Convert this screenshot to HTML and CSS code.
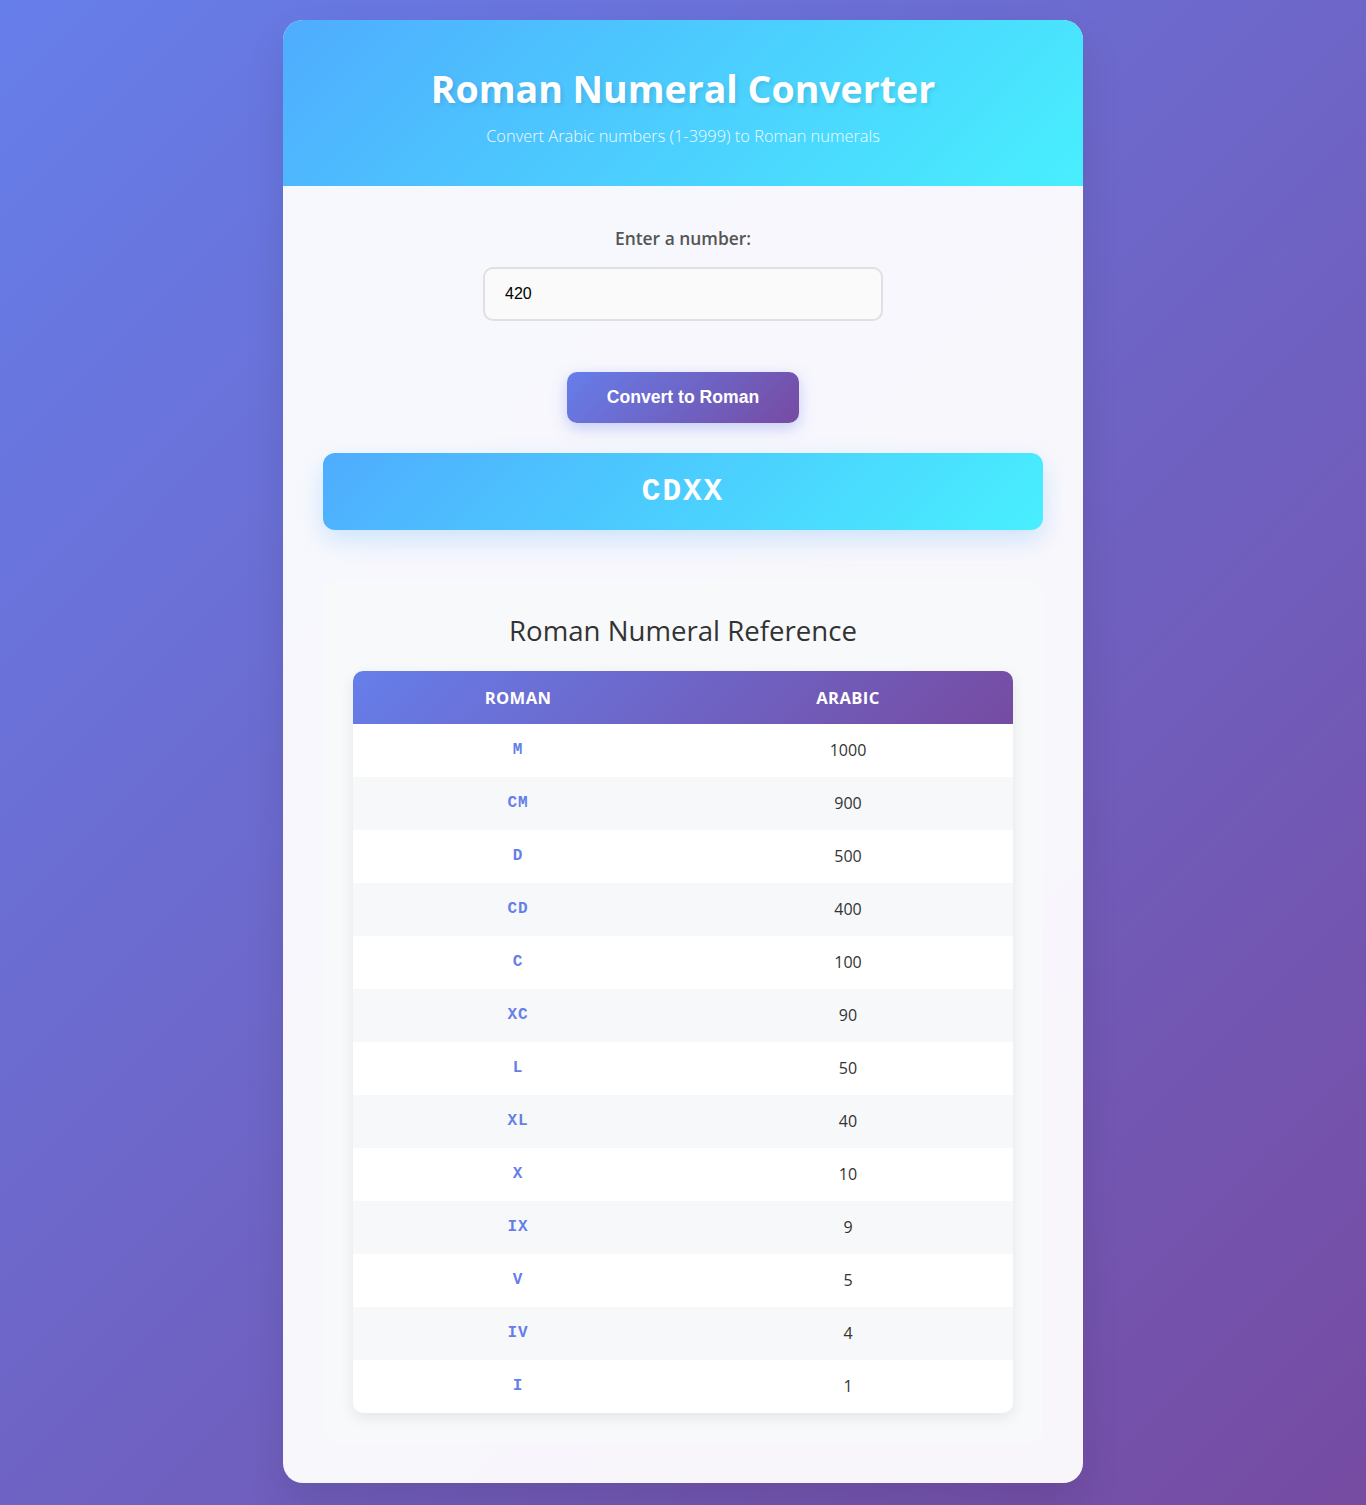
FILE: index.html
```html
<!DOCTYPE html>
<html lang="en">
<head>
<meta charset="utf-8">
<title>Roman Numeral Converter</title>
<link rel="stylesheet" href="styles.css">
</head>
<body>
<div class="container">
  <header class="header">
    <h1 class="title">Roman Numeral Converter</h1>
    <p class="subtitle">Convert Arabic numbers (1-3999) to Roman numerals</p>
  </header>
  <main class="content">
    <div class="input-group">
      <label class="label" for="num">Enter a number:</label>
      <input class="number-input" id="num" type="number" value="420">
    </div>
    <div class="actions">
      <button class="convert-btn" type="button">Convert to Roman</button>
    </div>
    <div class="result">CDXX</div>
    <section class="reference">
      <h2 class="ref-title">Roman Numeral Reference</h2>
      <table class="ref-table">
        <thead>
          <tr><th>Roman</th><th>Arabic</th></tr>
        </thead>
        <tbody>
          <tr><td class="roman">M</td><td>1000</td></tr>
          <tr><td class="roman">CM</td><td>900</td></tr>
          <tr><td class="roman">D</td><td>500</td></tr>
          <tr><td class="roman">CD</td><td>400</td></tr>
          <tr><td class="roman">C</td><td>100</td></tr>
          <tr><td class="roman">XC</td><td>90</td></tr>
          <tr><td class="roman">L</td><td>50</td></tr>
          <tr><td class="roman">XL</td><td>40</td></tr>
          <tr><td class="roman">X</td><td>10</td></tr>
          <tr><td class="roman">IX</td><td>9</td></tr>
          <tr><td class="roman">V</td><td>5</td></tr>
          <tr><td class="roman">IV</td><td>4</td></tr>
          <tr><td class="roman">I</td><td>1</td></tr>
        </tbody>
      </table>
    </section>
  </main>
</div>
</body>
</html>
```
FILE: styles.css
```css
* { box-sizing: border-box; }
html, body { margin: 0; padding: 0; }
body {
  font-family: "Open Sans", "Noto Sans", sans-serif;
  background: linear-gradient(135deg, #667eea 0%, #764ba2 100%);
  min-height: 1505px;
  padding: 20px;
  color: #333;
}
.container {
  width: 800px;
  margin: 0 auto;
  background: rgba(255, 255, 255, 0.95);
  border-radius: 20px;
  box-shadow: 0 20px 40px rgba(0, 0, 0, 0.1);
  overflow: hidden;
}
.header {
  background: linear-gradient(135deg, #4facfe 0%, #48effe 100%);
  color: #fff;
  text-align: center;
  padding: 42px 20px 39px;
}
.title {
  margin: 0 0 9px;
  font-size: 37.5px;
  line-height: 53px;
  font-weight: 700;
  text-shadow: 2px 2px 4px rgba(0, 0, 0, 0.1);
}
.subtitle {
  margin: 0;
  font-size: 16.4px;
  line-height: 23px;
  font-weight: 300;
  opacity: 0.92;
}
.content {
  padding: 40px;
}
.input-group {
  display: flex;
  flex-direction: column;
  align-items: center;
  margin-bottom: 51px;
}
.label {
  font-size: 17.4px;
  line-height: 25px;
  font-weight: 600;
  color: #555;
  margin-bottom: 16px;
}
.number-input {
  width: 400px;
  height: 54px;
  padding: 0 20px;
  border: 2px solid #e0e0e0;
  border-radius: 10px;
  background: #fafafa;
  font-family: "Liberation Sans", Arial, sans-serif;
  font-size: 16px;
  color: #000;
  outline: none;
}
.actions {
  display: flex;
  justify-content: center;
}
.convert-btn {
  background: linear-gradient(135deg, #667eea 0%, #764ba2 100%);
  color: #fff;
  border: none;
  border-radius: 10px;
  padding: 15px 40px;
  font-family: "Liberation Sans", Arial, sans-serif;
  font-size: 17.6px;
  line-height: 21px;
  font-weight: 700;
  box-shadow: 0 5px 15px rgba(102, 126, 234, 0.35);
  cursor: pointer;
}
.result {
  margin-top: 30px;
  background: linear-gradient(135deg, #4facfe 0%, #48effe 100%);
  border-radius: 12px;
  padding: 20px;
  text-align: center;
  color: #fff;
  font-family: "Liberation Mono", "Courier New", monospace;
  font-size: 31px;
  line-height: 37px;
  font-weight: 700;
  letter-spacing: 2px;
  box-shadow: 0 10px 25px rgba(79, 172, 254, 0.25);
}
.reference {
  margin-top: 50px;
  background: #f8f9fa;
  border-radius: 15px;
  padding: 30px;
}
.ref-title {
  margin: 0 0 20px;
  text-align: center;
  font-size: 27.6px;
  line-height: 41px;
  font-weight: 500;
  color: #333;
}
.ref-table {
  width: 100%;
  border-collapse: collapse;
  background: #fff;
  border-radius: 10px;
  overflow: hidden;
  box-shadow: 0 5px 15px rgba(0, 0, 0, 0.08);
}
.ref-table thead tr {
  background: linear-gradient(135deg, #667eea 0%, #764ba2 100%);
}
.ref-table th {
  color: #fff;
  padding: 15px;
  font-size: 16.6px;
  line-height: 23px;
  font-weight: 700;
  text-transform: uppercase;
  letter-spacing: 0.4px;
  text-align: center;
  width: 50%;
}
.ref-table td {
  padding: 15px;
  text-align: center;
  font-size: 16px;
  line-height: 23px;
  color: #333;
  font-weight: 400;
}
.ref-table tbody tr:nth-child(even) {
  background: #f7f8fa;
}
.ref-table td.roman {
  font-family: "Liberation Mono", "Courier New", monospace;
  font-weight: 700;
  color: #667eea;
  font-size: 16px;
  letter-spacing: 1px;
}
```
